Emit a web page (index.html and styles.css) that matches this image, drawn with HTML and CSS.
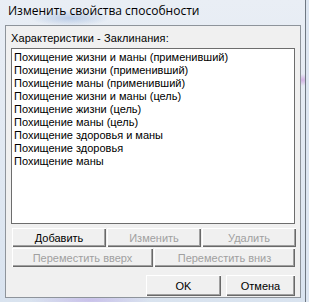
FILE: index.html
```html
<!DOCTYPE html>
<html lang="ru">
<head>
    <meta charset="UTF-8">
    <title>Изменить свойства способности</title>
    <link rel="stylesheet" href="styles.css">
</head>
<body>
    <div class="window">
        <div class="titlebar">Изменить свойства способности</div>
        <div class="client">
            <div class="caption">Характеристики - Заклинания:</div>
            <div class="listbox">
                <div class="item">Похищение жизни и маны (применивший)</div>
                <div class="item">Похищение жизни (применивший)</div>
                <div class="item">Похищение маны (применивший)</div>
                <div class="item">Похищение жизни и маны (цель)</div>
                <div class="item">Похищение жизни (цель)</div>
                <div class="item">Похищение маны (цель)</div>
                <div class="item">Похищение здоровья и маны</div>
                <div class="item">Похищение здоровья</div>
                <div class="item">Похищение маны</div>
            </div>
            <div class="row three">
                <button class="btn">Добавить</button>
                <button class="btn" disabled>Изменить</button>
                <button class="btn" disabled>Удалить</button>
            </div>
            <div class="row two">
                <button class="btn" disabled>Переместить вверх</button>
                <button class="btn" disabled>Переместить вниз</button>
            </div>
            <div class="footer">
                <button class="btn ok">OK</button>
                <button class="btn cancel">Отмена</button>
            </div>
        </div>
    </div>
</body>
</html>
```

FILE: styles.css
```css
body {
    margin: 0;
    width: 309px;
    height: 302px;
    overflow: hidden;
    font-family: "Liberation Sans", Arial, sans-serif;
    background: #dde6f1;
}
.window {
    width: 306px;
    height: 302px;
    border-right: 1px solid #6f7882;
    box-sizing: border-box;
    background:
        radial-gradient(ellipse 40px 8px at 70px 18px, rgba(140, 170, 215, 0.5), transparent),
        radial-gradient(ellipse 30px 6px at 300px 80px, rgba(190, 120, 210, 0.5), transparent),
        radial-gradient(ellipse 60px 10px at 90px 300px, rgba(190, 170, 230, 0.6), transparent),
        linear-gradient(#e9eef5, #d9e3ef);
}
.titlebar {
    height: 25px;
    box-sizing: border-box;
    padding: 2px 0 0 8px;
    font-family: "Open Sans", sans-serif;
    font-size: 12px;
    color: #000;
}
.client {
    margin-left: 5px;
    width: 296px;
    height: 273px;
    box-sizing: border-box;
    border: 1px solid #8e949b;
    background: #f0f0f0;
    padding: 5px 5px 0 5px;
    font-size: 11px;
    color: #000;
}
.caption {
    height: 16px;
    padding-top: 1px;
    box-sizing: border-box;
    letter-spacing: 0.1px;
}
.listbox {
    height: 176px;
    background: #fff;
    border: 1px solid #6d6d6d;
    padding: 2px 2px;
    box-sizing: border-box;
    margin-top: 1px;
}
.item {
    height: 13px;
    line-height: 13px;
}
.row {
    display: grid;
    gap: 1px;
    margin-left: 1px;
}
.three {
    grid-template-columns: 94px 94px 94px;
    margin-top: 4px;
}
.two {
    grid-template-columns: 141px 141px;
    margin-top: 1px;
}
.btn {
    height: 19px;
    padding: 0;
    font-family: "Liberation Sans", Arial, sans-serif;
    font-size: 11px;
    color: #000;
    background: #f0f0f0;
    border: none;
    box-shadow: inset 1px 1px #ffffff, inset -1px -1px #696969, inset -2px -2px #a0a0a0;
}
.btn:disabled {
    color: #a0a0a0;
}
.footer {
    display: flex;
    justify-content: flex-end;
    gap: 5px;
    margin-top: 8px;
}
.ok {
    width: 75px;
    height: 21px;
}
.cancel {
    width: 69px;
    height: 21px;
}
```
